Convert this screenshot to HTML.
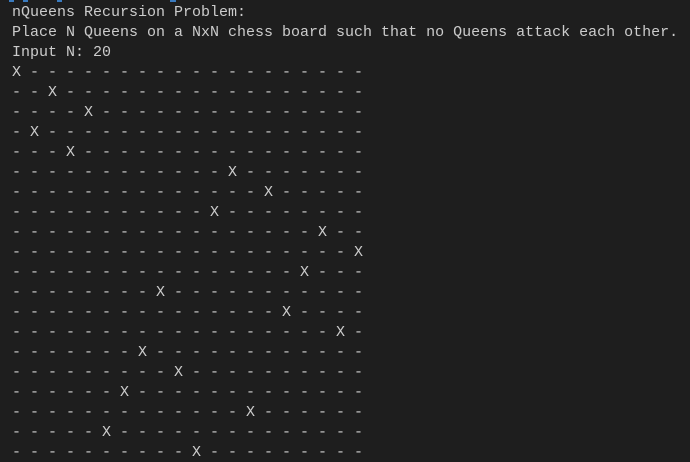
<!DOCTYPE html>
<html><head><style>
html,body{margin:0;padding:0;background:#1e1e1e;width:690px;height:462px;overflow:hidden}
pre{margin:0;padding:3px 0 0 12px;font-family:"Liberation Mono",monospace;font-size:15px;line-height:20px;color:#cccccc}
.b{position:absolute;top:0;height:2px;background:#3a7bbf}
</style></head><body>
<div class="b" style="left:9px;width:5px"></div>
<div class="b" style="left:23px;width:5px"></div>
<div class="b" style="left:57px;width:5px"></div>
<div class="b" style="left:170px;width:6px"></div>
<pre>nQueens Recursion Problem:
Place N Queens on a NxN chess board such that no Queens attack each other.
Input N: 20
X - - - - - - - - - - - - - - - - - - -
- - X - - - - - - - - - - - - - - - - -
- - - - X - - - - - - - - - - - - - - -
- X - - - - - - - - - - - - - - - - - -
- - - X - - - - - - - - - - - - - - - -
- - - - - - - - - - - - X - - - - - - -
- - - - - - - - - - - - - - X - - - - -
- - - - - - - - - - - X - - - - - - - -
- - - - - - - - - - - - - - - - - X - -
- - - - - - - - - - - - - - - - - - - X
- - - - - - - - - - - - - - - - X - - -
- - - - - - - - X - - - - - - - - - - -
- - - - - - - - - - - - - - - X - - - -
- - - - - - - - - - - - - - - - - - X -
- - - - - - - X - - - - - - - - - - - -
- - - - - - - - - X - - - - - - - - - -
- - - - - - X - - - - - - - - - - - - -
- - - - - - - - - - - - - X - - - - - -
- - - - - X - - - - - - - - - - - - - -
- - - - - - - - - - X - - - - - - - - -</pre>
</body></html>
